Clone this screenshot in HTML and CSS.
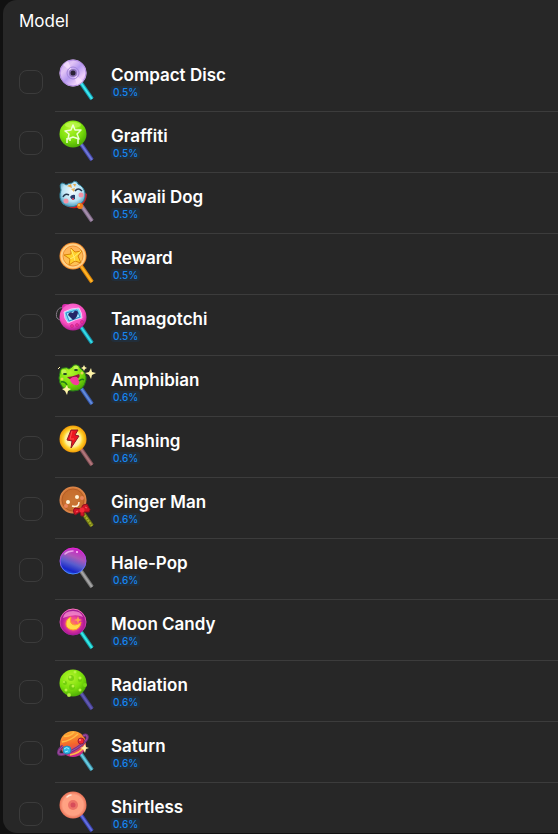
FILE: index.html
```html
<!DOCTYPE html>
<html lang="en">
<head>
<meta charset="utf-8">
<title>Model</title>
<link rel="stylesheet" href="styles.css">
</head>
<body>
<main class="panel">
<h1 class="heading">Model</h1>
<ul class="list">
<li><label class="row"><input type="checkbox" class="check"><span class="item">
<svg class="icon" viewBox="0 0 44 60" aria-hidden="true">
<defs><linearGradient id="disc" x1="0" y1="0" x2="1" y2="1"><stop offset="0" stop-color="#b79bf0"/><stop offset=".3" stop-color="#e2c4f6"/><stop offset=".5" stop-color="#b69af0"/><stop offset=".75" stop-color="#f0d0fa"/><stop offset="1" stop-color="#b48bea"/></linearGradient></defs>
<path class="stick" d="M26 32L37 48" stroke="#159fb5"/><path class="shine" d="M26 32L37 48" stroke="#3fe8ee"/>
<circle cx="18" cy="22" r="13.500" fill="url(#disc)"/><circle cx="18" cy="22" r="13" fill="none" stroke="#b18ae0"/>
<path d="M18 22L8 14A13 13 0 0 1 13 10ZM18 22L28 30A13 13 0 0 1 22 34Z" fill="#fae4ff" opacity=".7"/>
<circle cx="18" cy="22" r="6" fill="none" stroke="#a587dc"/><circle cx="18" cy="22" r="4" fill="#8c72b5"/><circle cx="18" cy="22" r="2.500" fill="#2a2136"/></svg>
<span class="text"><span class="name">Compact Disc</span><span class="badge">0.5%</span></span></span></label></li>
<li><label class="row"><input type="checkbox" class="check"><span class="item">
<svg class="icon" viewBox="0 0 44 60" aria-hidden="true">
<defs><radialGradient id="lime" cx=".4" cy=".3" r=".7"><stop offset="0" stop-color="#b4f52c"/><stop offset=".6" stop-color="#7de00c"/><stop offset="1" stop-color="#4fae05"/></radialGradient></defs>
<path class="stick" d="M26 32L37 48" stroke="#4547a8"/><path class="shine" d="M26 32L37 48" stroke="#7078d8"/>
<circle cx="18" cy="22" r="13.500" fill="url(#lime)"/><ellipse cx="18" cy="13" rx="8" ry="3" fill="#d5ff6d" opacity=".5"/>
<path d="M18 13L20 18L26 18L22 22L24 27L18 25L13 27L14 22L10 19L16 18ZM12 26V31M23 27V32M15 26V29" fill="none" stroke="#edffd2" stroke-width="1.500" stroke-linejoin="round"/></svg>
<span class="text"><span class="name">Graffiti</span><span class="badge">0.5%</span></span></span></label></li>
<li><label class="row"><input type="checkbox" class="check"><span class="item">
<svg class="icon" viewBox="0 0 44 60" aria-hidden="true">
<defs><radialGradient id="dog" cx=".5" cy=".4" r=".6"><stop offset="0" stop-color="#f6fcff"/><stop offset=".65" stop-color="#b9e4f4"/><stop offset="1" stop-color="#4a9cc0"/></radialGradient></defs>
<path class="stick" d="M26 32L37 48" stroke="#806a88"/><path class="shine" d="M26 32L37 48" stroke="#a58fac"/>
<path d="M9 31C17 39 31 36 32 21L27 18Z" fill="#c91a22"/>
<path d="M6 17Q4 11 7 10Q9 10 11 12Q14 10 17 10Q19 7 22 9L23 11Q29 14 30 20Q31 29 23 32Q15 36 8 31Q3 25 6 17Z" fill="url(#dog)" stroke="#2f7f98"/>
<path d="M12 13L16 11L17 15ZM18 11L21 11L20 14Z" fill="#e7aa4c"/><path d="M16 16L20 15L19 19Z" fill="#e8b95f"/>
<path d="M8 24Q10 20 14 22M20 18Q23 14 27 18" fill="none" stroke="#26384e" stroke-width="1.500"/>
<circle cx="11" cy="28" r="2.500" fill="#f294a6"/><circle cx="26" cy="22" r="2.500" fill="#f294a6"/>
<path d="M15 24Q17 21 20 22L20 26Q17 28 15 24Z" fill="#273b6b"/><circle cx="18" cy="26" r="1" fill="#ed4657"/>
<circle cx="25" cy="33" r="3" fill="#f17c18"/><circle cx="24" cy="32" r="1" fill="#ffd257"/></svg>
<span class="text"><span class="name">Kawaii Dog</span><span class="badge">0.5%</span></span></span></label></li>
<li><label class="row"><input type="checkbox" class="check"><span class="item">
<svg class="icon" viewBox="0 0 44 60" aria-hidden="true">
<defs><linearGradient id="coin" x1="0" y1="0" x2="0" y2="1"><stop offset="0" stop-color="#ffb25b"/><stop offset="1" stop-color="#ffc555"/></linearGradient></defs>
<path class="stick" d="M26 32L37 48" stroke="#dd8607"/><path class="shine" d="M26 32L37 48" stroke="#ffb529"/>
<circle cx="18" cy="22" r="13.500" fill="#f48d2d"/><circle cx="18" cy="22" r="12.500" fill="#ffd087"/><circle cx="18" cy="22" r="10" fill="url(#coin)" stroke="#ee9235"/>
<path d="M16 14L20 18L27 17L23 22L26 29L20 27L14 31L15 25L9 21L16 20Z" fill="#ffd12d" stroke="#d88309" stroke-linejoin="round"/><path d="M15 25L19 23L26 17M16 15L19 23L20 27" fill="none" stroke="#ffec75"/></svg>
<span class="text"><span class="name">Reward</span><span class="badge">0.5%</span></span></span></label></li>
<li><label class="row"><input type="checkbox" class="check"><span class="item">
<svg class="icon" viewBox="0 0 44 60" aria-hidden="true">
<defs><radialGradient id="toy" cx=".45" cy=".35" r=".65"><stop offset="0" stop-color="#ff7ee0"/><stop offset=".7" stop-color="#f64cbd"/><stop offset="1" stop-color="#ae1b91"/></radialGradient></defs>
<path class="stick" d="M26 32L37 48" stroke="#1592aa"/><path class="shine" d="M26 32L37 48" stroke="#36dce6"/>
<path d="M8 13C3 11 0 19 2 23Q4 26 7 24" fill="none" stroke="#857a87" stroke-width="1"/>
<rect x="7" y="9" width="7" height="6" rx="3" fill="#d92cae"/><circle cx="18" cy="22" r="13.500" fill="url(#toy)"/>
<path d="M9 17Q16 13 24 13Q27 18 27 23Q21 24 13 28Q9 24 9 17Z" fill="#79dcf5" stroke="#ffc5f4"/>
<path d="M11 18L22 15L25 22L14 26Z" fill="#a5e9ff" stroke="#318bca"/><path d="M18 25L13 20Q14 16 18 18Q20 14 23 17Q23 22 18 25Z" fill="#242567"/>
<g fill="#ee329c" stroke="#ab207d" stroke-width=".5"><circle cx="17" cy="31" r="1.500"/><circle cx="22" cy="30" r="1.500"/><circle cx="27" cy="27" r="1.500"/></g></svg>
<span class="text"><span class="name">Tamagotchi</span><span class="badge">0.5%</span></span></span></label></li>
<li><label class="row"><input type="checkbox" class="check"><span class="item">
<svg class="icon" viewBox="0 0 44 60" aria-hidden="true">
<path class="stick" d="M26 32L37 48" stroke="#3659ae"/><path class="shine" d="M26 32L37 48" stroke="#638bd9"/>
<path d="M5 17Q5 12 9 12Q12 11 14 13L17 11Q18 8 22 9Q25 10 25 12Q32 17 31 24Q29 35 18 35Q8 35 5 27Q3 22 5 17Z" fill="url(#lime)" stroke="#287b1b"/>
<circle cx="9" cy="16" r="2.500" fill="#c3f34f"/><circle cx="21" cy="12" r="2.500" fill="#c3f34f"/><ellipse cx="10" cy="18" rx="2" ry="1" fill="#173e24"/><ellipse cx="21" cy="14" rx="2" ry="1" fill="#173e24"/>
<path d="M12 21Q17 21 24 18Q26 21 22 23Q16 26 12 21Z" fill="#8e173f"/><path d="M15 23Q18 20 22 21Q26 26 23 29Q17 30 15 24Z" fill="#f53d9c"/>
<path d="M6 26Q10 25 12 29M24 25Q27 22 29 24" fill="none" stroke="#267d18" stroke-width="1.500"/><circle cx="7" cy="23" r="1.500" fill="#e6d855"/><circle cx="27" cy="17" r="1.500" fill="#e6d855"/>
<path d="M36 12L37 16L41 17L37 19L36 23L34 19L30 17L34 16ZM12 29L13 32L16 33L13 35L12 39L10 35L7 33L10 32ZM29 9L30 11L32 12L30 13L29 15L28 13L26 12L28 11Z" fill="#fff4a8"/><path d="M3 13L5 11" stroke="#fff4a8"/></svg>
<span class="text"><span class="name">Amphibian</span><span class="badge">0.6%</span></span></span></label></li>
<li><label class="row"><input type="checkbox" class="check"><span class="item">
<svg class="icon" viewBox="0 0 44 60" aria-hidden="true">
<defs><radialGradient id="flash"><stop offset="0" stop-color="#ffffe0"/><stop offset=".55" stop-color="#fff0a0"/><stop offset=".72" stop-color="#ffd42d"/><stop offset="1" stop-color="#f29a05"/></radialGradient></defs>
<path class="stick" d="M26 32L37 48" stroke="#875259"/><path class="shine" d="M26 32L37 48" stroke="#b0777b"/>
<circle cx="18" cy="22" r="13.500" fill="url(#flash)"/><path d="M16 13L23 13L20 18L24 19L16 31L17 24L12 23Z" fill="#ed1620" stroke="#8e1825" stroke-linejoin="round"/><path d="M17 14L15 22L19 22" fill="none" stroke="#ff5149"/></svg>
<span class="text"><span class="name">Flashing</span><span class="badge">0.6%</span></span></span></label></li>
<li><label class="row"><input type="checkbox" class="check"><span class="item">
<svg class="icon" viewBox="0 0 44 60" aria-hidden="true">
<defs><radialGradient id="ginger"><stop offset="0" stop-color="#ca7735"/><stop offset=".75" stop-color="#c66d2d"/><stop offset="1" stop-color="#e38b4d"/></radialGradient></defs>
<path class="stick" d="M26 32L37 48" stroke="#737b12"/><path class="shine" d="M26 32L37 48" stroke="#a8b02e" stroke-dasharray="2 1"/>
<circle cx="18" cy="22" r="13.500" fill="url(#ginger)"/><circle cx="18" cy="22" r="11" fill="none" stroke="#a54f1b" opacity=".6"/>
<circle cx="13" cy="24" r="2" fill="#fff4d8"/><circle cx="22" cy="19" r="2" fill="#fff4d8"/><path d="M17 28Q24 30 24 24" fill="none" stroke="#fff4d8" stroke-width="1.500"/><circle cx="11" cy="28" r="2" fill="#eb855b"/><circle cx="27" cy="20" r="2" fill="#eb855b"/>
<path d="M26 31L20 30Q17 32 20 37L25 34L26 38L29 38L29 34L34 34Q36 31 34 30L32 26L28 27Z" fill="#d31526" stroke="#8b101e" stroke-linejoin="round"/><circle cx="27" cy="32" r="2.500" fill="#f32a38"/><path d="M21 34L23 33M30 29L32 30" stroke="#ff5a60"/></svg>
<span class="text"><span class="name">Ginger Man</span><span class="badge">0.6%</span></span></span></label></li>
<li><label class="row"><input type="checkbox" class="check"><span class="item">
<svg class="icon" viewBox="0 0 44 60" aria-hidden="true">
<defs><linearGradient id="hale" x1=".7" y1="0" x2=".3" y2="1"><stop offset="0" stop-color="#d21bc6"/><stop offset=".35" stop-color="#ab58ba"/><stop offset=".6" stop-color="#585dcd"/><stop offset=".85" stop-color="#1625c9"/><stop offset="1" stop-color="#2868f4"/></linearGradient><linearGradient id="haleRim" x1="0" y1="0" x2="0" y2="1"><stop offset="0" stop-color="#f01edb"/><stop offset="1" stop-color="#438bff"/></linearGradient></defs>
<path class="stick" d="M26 32L37 48" stroke="#777"/><path class="shine" d="M26 32L37 48" stroke="#a5a5a5"/>
<circle cx="18" cy="22" r="13" fill="url(#hale)" stroke="url(#haleRim)"/><path d="M10 15Q13 12 18 12" fill="none" stroke="#f5b6f2" stroke-width="1.500" stroke-linecap="round" opacity=".8"/><circle cx="22" cy="13" r="1" fill="#ffc5fa"/></svg>
<span class="text"><span class="name">Hale-Pop</span><span class="badge">0.6%</span></span></span></label></li>
<li><label class="row"><input type="checkbox" class="check"><span class="item">
<svg class="icon" viewBox="0 0 44 60" aria-hidden="true">
<defs><radialGradient id="moon" cx=".5" cy=".55" r=".55"><stop offset="0" stop-color="#ff7b57"/><stop offset=".4" stop-color="#f0459a"/><stop offset=".75" stop-color="#b81c98"/><stop offset="1" stop-color="#971f91"/></radialGradient><linearGradient id="moonRim" x1="0" y1="0" x2="0" y2="1"><stop offset="0" stop-color="#ff72bd"/><stop offset="1" stop-color="#a51c9c"/></linearGradient></defs>
<path class="stick" d="M26 32L37 48" stroke="#13a4ab"/><path class="shine" d="M26 32L37 48" stroke="#37e9e5"/>
<circle cx="18" cy="22" r="13" fill="url(#moon)" stroke="url(#moonRim)"/><path d="M8 18Q9 11 18 11Q26 11 28 17Q20 13 8 18Z" fill="#ffa0d6" opacity=".7"/>
<path d="M16 17Q14 25 20 25Q23 25 26 22Q25 30 18 30Q11 29 11 24Q11 19 16 17Z" fill="#ffdc45" stroke="#ff9c2f"/><path d="M23 16L24 19L27 20L24 21L23 24L22 21L19 20L22 19Z" fill="#ffa44c"/></svg>
<span class="text"><span class="name">Moon Candy</span><span class="badge">0.6%</span></span></span></label></li>
<li><label class="row"><input type="checkbox" class="check"><span class="item">
<svg class="icon" viewBox="0 0 44 60" aria-hidden="true">
<path class="stick" d="M26 32L37 48" stroke="#453f94"/><path class="shine" d="M26 32L37 48" stroke="#635bb2"/>
<circle cx="18" cy="22" r="13.500" fill="url(#lime)"/><circle cx="30" cy="24" r="2" fill="#78d715"/><circle cx="14" cy="34" r="2" fill="#a6e83b"/>
<g fill="#66c40c" opacity=".7"><circle cx="16" cy="17" r="3"/><circle cx="25" cy="19" r="2"/><circle cx="17" cy="26" r="3"/><circle cx="10" cy="22" r="2"/></g>
<g fill="#b9f344"><circle cx="15" cy="16" r="1.500"/><circle cx="25" cy="17" r="1.500"/><circle cx="18" cy="25" r="1.500"/><circle cx="9" cy="21" r="1"/><circle cx="25" cy="29" r="1.500"/><circle cx="11" cy="29" r="1.500"/><circle cx="20" cy="11" r="1.500"/><circle cx="14" cy="34" r="1"/></g></svg>
<span class="text"><span class="name">Radiation</span><span class="badge">0.6%</span></span></span></label></li>
<li><label class="row"><input type="checkbox" class="check"><span class="item">
<svg class="icon" viewBox="0 0 44 60" aria-hidden="true">
<defs><linearGradient id="saturn" x1=".4" y1="0" x2=".6" y2="1"><stop offset="0" stop-color="#ffac35"/><stop offset=".5" stop-color="#f3662a"/><stop offset="1" stop-color="#c7229a"/></linearGradient></defs>
<path class="stick" d="M26 32L37 48" stroke="#3c8ca3"/><path class="shine" d="M26 32L37 48" stroke="#68cce0"/>
<circle cx="18" cy="22" r="13" fill="url(#saturn)"/><path d="M7 20Q15 19 23 12M9 14Q15 15 19 10M15 33Q25 31 29 25" fill="none" stroke="#ffbd46" stroke-width="1.500"/>
<path d="M8 24Q2 29 4 32Q9 34 22 26Q34 18 32 14Q31 12 28 14" fill="none" stroke="#743580" stroke-width="3"/><path d="M8 24Q2 29 4 32Q9 34 22 26Q34 18 32 14Q31 12 28 14" fill="none" stroke="#a54da2" stroke-width="1"/>
<circle cx="12" cy="28" r="4" fill="#31b9e8" stroke="#2588b8"/><path d="M9 27Q12 24 14 27M10 30L13 29" fill="none" stroke="#9befff"/>
<circle cx="26" cy="19" r="3" fill="#f22535" stroke="#9b1c35"/><circle cx="25" cy="18" r="1" fill="#ff8c80"/><path d="M30 22L31 25L34 26L31 27L30 31L28 27L25 26L28 25Z" fill="#fff0a6"/></svg>
<span class="text"><span class="name">Saturn</span><span class="badge">0.6%</span></span></span></label></li>
<li><label class="row"><input type="checkbox" class="check"><span class="item">
<svg class="icon" viewBox="0 0 44 60" aria-hidden="true">
<defs><radialGradient id="peach"><stop offset="0" stop-color="#ffa17e"/><stop offset=".75" stop-color="#ffa284"/><stop offset="1" stop-color="#e87055"/></radialGradient></defs>
<path class="stick" d="M26 32L37 48" stroke="#3941ad"/><path class="shine" d="M26 32L37 48" stroke="#6470df"/>
<circle cx="18" cy="22" r="13.500" fill="url(#peach)"/><circle cx="18" cy="22" r="5" fill="#ed7267"/><circle cx="18" cy="22" r="2.500" fill="#d74c59"/><path d="M12 14Q14 12 16 12" fill="none" stroke="#ffe3d1" stroke-width="1.500" stroke-linecap="round"/></svg>
<span class="text"><span class="name">Shirtless</span><span class="badge">0.6%</span></span></span></label></li>
</ul>
</main>
</body>
</html>
```
FILE: styles.css
```css
* {
  box-sizing: border-box;
}

body {
  margin: 0;
  background: #111;
  color: #fff;
  font-family: Inter, "Liberation Sans", sans-serif;
}

.panel {
  height: calc(100vh - 1px);
  margin-left: 3px;
  overflow-x: hidden;
  overflow-y: auto;
  scrollbar-width: none;
  background: #272727;
  border-radius: 14px 0 0 14px;
}

.heading {
  margin: 0;
  padding: 9px 16px 18px;
  font-size: 17px;
  font-weight: 400;
  line-height: 24px;
}

.list {
  margin: 0;
  padding: 0;
  list-style: none;
}

.row {
  display: flex;
  align-items: center;
  gap: 12px;
  padding-left: 16px;
}

.check {
  appearance: none;
  flex: none;
  width: 24px;
  height: 24px;
  margin: 0;
  border: 1px solid #3b3b3b;
  border-radius: 8px;
}

.check:checked {
  background: #1686f0;
}

.item {
  display: flex;
  flex: 1;
  gap: 12px;
  border-bottom: 1px solid #3c3c3c;
}

.icon {
  flex: none;
  width: 44px;
  height: 60px;
}

.stick,
.shine {
  fill: none;
  stroke-width: 4px;
}

.shine {
  stroke-width: 2px;
}

.text {
  display: flex;
  flex-direction: column;
  align-items: flex-start;
  padding-top: 13px;
}

.name {
  font-size: 17px;
  font-weight: 600;
  line-height: 22px;
}

.badge {
  padding: 0 2px;
  border-radius: 3px;
  background: #222e3a;
  color: #1686f0;
  font-size: 10px;
  font-weight: 500;
  line-height: 12px;
}
```
